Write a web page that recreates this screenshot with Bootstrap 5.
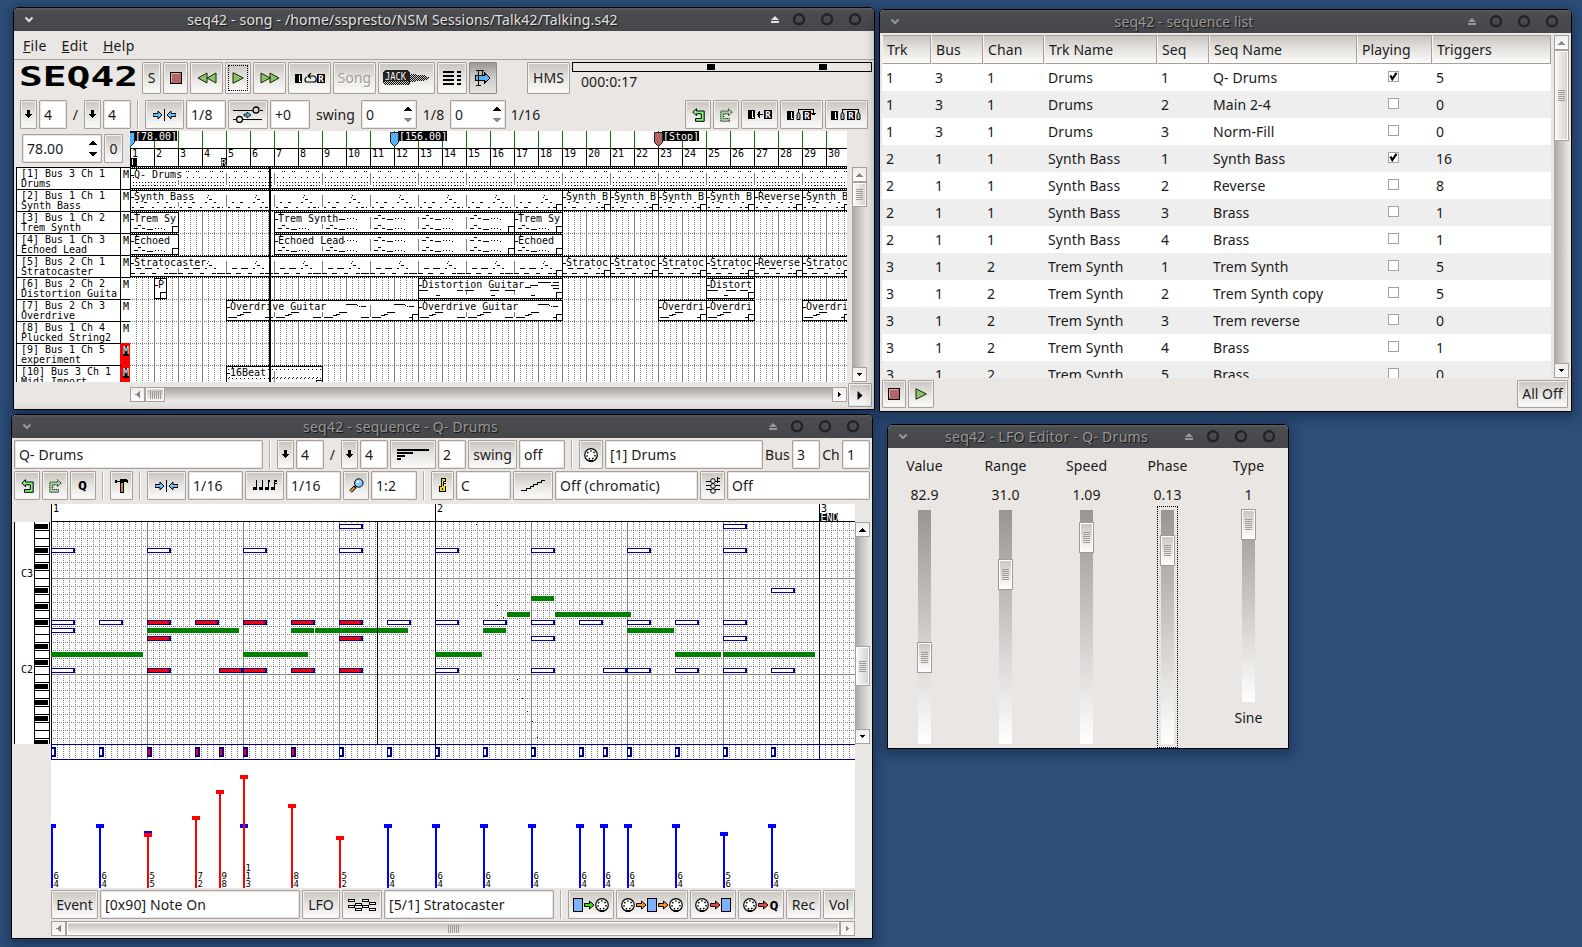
<!DOCTYPE html>
<html lang="en">
<head>
<meta charset="utf-8">
<title>seq42</title>
<link href="https://cdn.jsdelivr.net/npm/bootstrap@5.3.0/dist/css/bootstrap.min.css" rel="stylesheet">
<style>
html,body{height:100%}
body{background:#2d4e79;font:14px/18px "Noto Sans","Open Sans",sans-serif;letter-spacing:.1px;color:#1a1a1a;overflow:hidden;position:relative}
svg{display:block;shape-rendering:crispEdges;flex:none;letter-spacing:0}
svg .sm{shape-rendering:auto}
svg text{font-family:"DejaVu Sans Mono",monospace;font-size:10px}
.win{position:absolute;border:1px solid #000;border-radius:5px 5px 0 0;background:#eae6e3;box-shadow:0 3px 12px 3px rgba(8,20,45,.4);overflow:hidden;display:flex;flex-direction:column}
.w-song{left:13px;top:7px;width:862px;height:403px}
.w-list{left:879px;top:9px;width:693px;height:403px}
.w-seq{left:11px;top:414px;width:862px;height:525px}
.w-lfo{left:887px;top:424px;width:402px;height:325px}
.titlebar{height:23px;flex:none;background:linear-gradient(#5b5d60,#4b4d50 12%,#454649);color:#97989a;text-shadow:1px 1px 1px #111;display:flex;align-items:center}
.titlebar>span{flex:1;text-align:center;white-space:nowrap}
.titlebar.on{color:#e0e1e2}
.menu{height:29px;border-bottom:1px solid #a9a29c;padding:1px 0 0 9px;gap:15px;letter-spacing:.3px}
.bar{gap:2px;flex:none;display:flex;align-items:center}
.g29{height:29px}.g32{height:32px}
.btn.tb{--bs-btn-padding-x:0;--bs-btn-padding-y:0;--bs-btn-border-radius:1px;height:100%;flex:none;display:flex;align-items:center;justify-content:center;font-size:14px;line-height:1;color:#1c1c1c;border:1px solid #a8a19b;box-shadow:inset 0 0 0 1px #f3f1ef;background:linear-gradient(#c9c4bf,#e6e4e1 50%,#fcfcfb);white-space:nowrap}
.btn.tb.dim{color:#a09a95;text-shadow:1px 1px #fff}
.btn.tb.held{background:linear-gradient(#9b9794,#cfccca 50%,#e6e4e2);box-shadow:none;border-color:#8f8984}
.ent{height:100%;flex:none;background:#fff;border:1px solid #a8a19b;border-radius:1px;box-shadow:inset 0 0 0 1px #e8e5e2;display:flex;align-items:center;padding:0 4px;justify-content:space-between;white-space:nowrap}
.tx{flex:none;text-align:center;white-space:nowrap}
.sep{width:2px;height:100%;border-left:1px solid #b3aca6;border-right:1px solid #fff;margin:0 4px;flex:none}
.w17{width:17px}.w18{width:18px}.w19{width:19px}.w20{width:20px}.w23{width:23px}.w24{width:24px}.w25{width:25px}.w26{width:26px}.w28{width:28px}.w30{width:30px}.w32{width:32px}.w33{width:33px}.w35{width:35px}.w37{width:37px}.w38{width:38px}.w39{width:39px}.w40{width:40px}.w43{width:43px}.w46{width:46px}.w47{width:47px}.w49{width:49px}.w51{width:51px}.w55{width:55px}.w56{width:56px}.w57{width:57px}.w72{width:72px}.w80{width:80px}.w143{width:143px}.w158{width:158px}.w170{width:170px}.w200{width:200px}.w249{width:249px}
.focus{width:20px;height:26px;border:1px dotted #000;display:flex;align-items:center;justify-content:center}
.tracks{width:114px;height:215px;overflow:hidden;background:#fff;border-left:1px solid #000;font:10px/10px "DejaVu Sans Mono",monospace;letter-spacing:-.02px}
.trk{height:22px;border-top:1px solid #000;display:flex;color:#000}
.trk>div{width:104px;flex:none;border-right:1px solid #000;padding:1px 0 0 4px;white-space:pre}
.trk>b{flex:1;font-weight:400;padding:2px 0 0 2px}
.trk>b>i{font-style:normal;display:block;width:6px;height:10px;line-height:10px}
.trk.mu>div{border-right-color:#f00}
.trk.mu>b{background:#f00;color:#fff;margin-top:-1px;padding-top:3px}
.trk.mu>b>i{background:#000}
.sbtn{width:15px;height:15px;flex:none;border:1px solid #a8a19b;background:linear-gradient(#efedeb,#fdfdfd);display:flex;align-items:center;justify-content:center}
.sv{width:15px;display:flex;flex-direction:column;background:linear-gradient(90deg,#a9a6a4,#e9e7e5);flex:none}
.sh{height:15px;display:flex;background:linear-gradient(#a3a09d,#efedeb);flex:none}
.thumb{border:1px solid #a8a19b;display:flex;align-items:center;justify-content:center;flex:none;box-shadow:inset 0 0 0 1px #fff}
.sv .thumb{width:15px;background:linear-gradient(90deg,#fbfbfa,#d3cfcb)}
.sh .thumb{height:15px;background:linear-gradient(#fbfbfa 0,#c9c5c0 20%,#fbfbfa)}
.lst{display:grid;grid-template-columns:49px 52px 61px 113px 52px 148px 75px 119px;width:669px}
.lst.hd{height:29px;flex:none}
.hd>div{border:1px solid #a8a19b;border-left-color:#f6f4f2;border-right-width:1px;background:linear-gradient(#c9c4bf,#e6e4e1 50%,#fbfbfa);padding:5px 0 0 4px}
.lr{height:27px;background:#fff}.lr:nth-child(even){background:#eee}
.lr>div{padding:5px 0 0 4px;white-space:nowrap}
.cbx{width:11px;height:11px;border:1px solid #a8a19b;background:#fff;margin:2px 0 0 27px}
.sld{width:81px;display:flex;flex-direction:column;align-items:center;flex:none}
.trough{position:relative;width:13px;background:linear-gradient(#999593,#fff)}
.knob{position:absolute;left:-1px;width:15px;height:31px;border:1px solid #a39c96;box-shadow:inset 0 0 0 1px #fff;background:linear-gradient(#cac6c1,#fff);display:flex;align-items:center;justify-content:center}
.ring{position:absolute;inset:-4px -4px -4px -4px;border:1px dotted #000}
</style>
</head>
<body>
<svg width="0" height="0" style="position:absolute">
<defs>
<symbol id="ctl" viewBox="0 0 109 23"><g class="sm" fill="none" stroke="#222325" stroke-width="2.4"><circle cx="34" cy="11.3" r="5"/><circle cx="62" cy="11.3" r="5"/><circle cx="90" cy="11.3" r="5"/></g><g class="sm" fill="currentColor"><path d="M6 12l4-4 4 4z"/><rect x="6" y="13" width="8" height="2"/></g></symbol>
<symbol id="chev" viewBox="0 0 26 23"><path class="sm" d="M11.500 9.500l3.500 3.500 3.500-3.500" fill="none" stroke="currentColor" stroke-width="2"/></symbol>
<symbol id="dn" viewBox="1 0 8 9"><path d="M3 0h3v4h2v1l-3.500 3-3.500-3v-1h2z"/></symbol>
<symbol id="spin" viewBox="0 0 8 17"><path d="M0 5l4-4.500 4 4.500z"/><path d="M0 12l4 4.500 4-4.500z" fill="var(--lo,#000)"/></symbol>
<symbol id="stop" viewBox="0 0 12 12"><rect width="12" height="12"/><rect x="1" y="1" width="10" height="10" fill="#b46464"/><path d="M1 1h9v1H2v8H1z" fill="#e4a8a8"/></symbol>
<symbol id="play" viewBox="0 0 12 12"><path class="sm" d="M1 .7v10.600L11.300 6z" fill="#8fc16a" stroke="#122b08"/></symbol>
<symbol id="ff" viewBox="0 0 20 12"><path class="sm" d="M1 1v10l9-5zM10 1v10l9-5z" fill="#8fc16a" stroke="#122b08"/></symbol>
<symbol id="L" viewBox="0 0 8 9"><rect width="7" height="9"/><path d="M4.500 1v6.500H6" fill="none" stroke="#fff"/></symbol>
<symbol id="R" viewBox="0 0 8 9"><rect width="8" height="9"/><text x="1.200" y="8" fill="#fff" style="font-size:9px;font-weight:bold">R</text></symbol>
<symbol id="loop" viewBox="0 0 30 11"><use href="#L" y="1" width="8" height="9"/><path class="sm" d="M12 4c-3 1-2.500 5 0 5h7c3 0 3-5 0-6h-6M16 0l-3 3 3 2.500" fill="none" stroke="#000" stroke-width="1.200"/><use href="#R" x="22" y="1" width="8" height="9"/></symbol>
<pattern id="chk" width="2" height="2" patternUnits="userSpaceOnUse"><rect width="2" height="2" fill="#c9c6c2"/><rect width="1" height="1" fill="#111"/><rect x="1" y="1" width="1" height="1" fill="#111"/></pattern>
<symbol id="jack" viewBox="0 0 48 16"><path d="M2 0h23l2 3v10l-2 2H2l-2-2V2z" fill="#222"/><path d="M1 11h25v2l-2 2H2l-1-2z" fill="url(#chk)"/><path d="M27 4h6v1h8l6 3-6 3H33v1h-6z" fill="url(#chk)"/><text x="2" y="10" fill="#f4f4f4" textLength="21" lengthAdjust="spacingAndGlyphs">JACK</text></symbol>
<symbol id="lines" viewBox="0 0 18 14"><path d="M0 1h11M0 5h11M0 9h11M0 13h11M14 1h4M14 5h4M14 9h4M14 13h4" stroke="#000" stroke-width="2"/></symbol>
<symbol id="follow" viewBox="0 0 18 16"><path d="M1 5.500h9V2.500L16 8l-6 5.500v-3H1z" fill="#55b5f5" stroke="#000"/><path d="M4.500 0v15M8.500 0v5M2 .5h8M2 15h5" stroke="#000"/></symbol>
<symbol id="snap" viewBox="0 0 23 12"><g class="sm" fill="#6cc4fa" stroke="#000"><path d="M0 4.500h5V2l4 4-4 4V7.500H0z"/><path d="M23 4.500h-5V2l-4 4 4 4V7.500h5z"/></g><path d="M11.500 0v12" stroke="#000"/></symbol>
<symbol id="trans" viewBox="0 0 30 17"><path d="M0 4.500h20M27 4.500h3M0 13.500h3M10 13.500h19" stroke="#000"/><g class="sm" fill="none" stroke="#000" stroke-width="1.300"><circle cx="23" cy="4" r="3"/><circle cx="6.500" cy="13.500" r="3"/></g><path class="sm" d="M11 8h3V6l4 3-4 3v-2h-3z" fill="#55b5f5" stroke="#000" stroke-width=".8"/></symbol>
<symbol id="undo" viewBox="0 0 13 14"><path class="sm" d="M.8 4L4.500.700v2.300h7.700v10.300H3.500v-2.800h5.800V5.800H4.500v2z" fill="#7df07d" stroke="#000"/></symbol>
<symbol id="redo" viewBox="0 0 13 14"><path class="sm" d="M12.200 4L8.500.700v2.300H.8v10.300h8.700v-2.800H3.700V5.800h4.800v2z" fill="#9ed39e" stroke="#222" stroke-dasharray="1.300 .7"/></symbol>
<symbol id="bott" viewBox="0 0 5 9"><path class="sm" d="M1 8.500v-5L2.500 1 4 3.500v5z" fill="#b5b8a8" stroke="#000"/></symbol>
<symbol id="lr1" viewBox="0 0 24 11"><use href="#L" y="1" width="8" height="9"/><path d="M9 5.500h6M11.500 2v7M10.500 3v5" stroke="#000"/><use href="#R" x="16" y="1" width="8" height="9"/></symbol>
<symbol id="lr2" viewBox="0 0 30 12"><use href="#L" y="2" width="8" height="9"/><use href="#bott" x="9" y="2" width="5" height="9"/><use href="#R" x="16" y="2" width="8" height="9"/><path d="M11.500 3V.5h15V5M24 4.500h5M25 5.500h3" fill="none" stroke="#000"/></symbol>
<symbol id="lr3" viewBox="0 0 31 12"><use href="#L" y="2" width="8" height="9"/><use href="#bott" x="9" y="2" width="5" height="9"/><use href="#R" x="16" y="2" width="8" height="9"/><use href="#bott" x="25" y="2" width="5" height="9"/><path d="M11.500 3V.5h16V3" fill="none" stroke="#000"/></symbol>
<symbol id="bars" viewBox="0 0 32 11"><path d="M0 1h32M0 4h16M0 7h8M0 10h4" stroke="#000" stroke-width="2"/></symbol>
<symbol id="ham" viewBox="0 0 13 14"><path d="M0 1h2v1h3V0h6l2 2v2h-1V3H9v1H5V3H2v1H0z"/><rect x="5" y="4" width="4" height="10"/><rect x="6" y="4" width="2" height="9" fill="#c48a3e"/></symbol>
<symbol id="notes" viewBox="0 0 24 11"><g fill="#000"><rect y="7" width="4" height="3"/><rect x="3" width="1" height="9"/><rect x="6" y="7" width="4" height="3"/><rect x="9" width="1" height="9"/><rect x="12" y="7" width="4" height="3"/><rect x="15" width="1" height="9"/><rect x="15" width="2" height="2"/><rect x="18" y="7" width="4" height="3"/><rect x="21" width="1" height="9"/><rect x="21" width="3" height="2"/><rect x="21" y="3" width="3" height="1"/></g></symbol>
<symbol id="mag" viewBox="0 0 15 15"><path class="sm" d="M1.500 13.500l5-5" stroke="#000" stroke-width="3.500"/><path class="sm" d="M1.500 13.500l4-4" stroke="#e0952e" stroke-width="2"/><circle class="sm" cx="9.800" cy="5" r="4.200" fill="#7fd0fa" stroke="#000"/><circle class="sm" cx="8.800" cy="3.800" r="1.300" fill="#fff"/></symbol>
<symbol id="key" viewBox="0 0 8 15"><path d="M2 0h5v4H5v1h2v1H5v2h2v6H0V8h2z"/><path d="M3 1h3v2H4v5h2v5H1V9h2z" fill="#f5d800"/><rect x="3" y="10" width="1" height="2"/></symbol>
<symbol id="scale" viewBox="0 0 24 13"><path d="M0 11.500h5v-2h4v-2h3v-2h4v-2h4v-2h4" fill="none" stroke="#000"/></symbol>
<symbol id="chord" viewBox="0 0 14 17"><path d="M0 4.500h14M0 8.500h14M0 12.500h14" stroke="#000"/><g class="sm" fill="#eee" stroke="#000"><circle cx="7" cy="4" r="2.300"/><circle cx="7" cy="9" r="2.300"/><circle cx="7" cy="14" r="2.300"/></g><path d="M11.500 0v6M11 1h3" stroke="#000"/></symbol>
<symbol id="din" viewBox="0 0 14 14"><circle class="sm" cx="7" cy="7" r="6.300" fill="#fff" stroke="#000" stroke-width="1.200"/><circle class="sm" cx="7" cy="7" r="4" fill="none" stroke="#000" stroke-width="1.500" stroke-dasharray="1.500 2"/><path d="M5 13h4" stroke="#000" stroke-width="2"/></symbol>
<symbol id="pg" viewBox="0 0 10 14"><rect x=".5" y=".5" width="9" height="13" fill="#7fb2fb" stroke="#000"/></symbol>
<symbol id="arr" viewBox="0 0 11 10"><path class="sm" d="M.5 3.500h5V1l4.500 4L5.500 9V6.500h-5z" stroke="#000"/></symbol>
<symbol id="io1" viewBox="0 0 36 14"><use href="#pg" width="10" height="14"/><use href="#arr" x="11" y="2" width="11" height="10" fill="#3dde10"/><use href="#din" x="22" width="14" height="14"/></symbol>
<symbol id="io2" viewBox="0 0 62 14"><use href="#din" width="14" height="14"/><use href="#arr" x="15" y="2" width="11" height="10" fill="#f5942a"/><use href="#pg" x="26" width="10" height="14"/><use href="#arr" x="37" y="2" width="11" height="10" fill="#f5942a"/><use href="#din" x="48" width="14" height="14"/></symbol>
<symbol id="io3" viewBox="0 0 36 14"><use href="#din" width="14" height="14"/><use href="#arr" x="15" y="2" width="11" height="10" fill="#f04848"/><use href="#pg" x="26" width="10" height="14"/></symbol>
<symbol id="io4" viewBox="0 0 36 14"><use href="#din" width="14" height="14"/><use href="#arr" x="15" y="2" width="11" height="10" fill="#f04848"/><text x="26.500" y="12" textLength="9" lengthAdjust="spacingAndGlyphs" style="font-size:13px;font-weight:bold">Q</text></symbol>
<symbol id="waves" viewBox="0 0 28 12"><g fill="#fff" stroke="#000"><rect x=".5" y=".5" width="6" height="2"/><rect x="7.500" y="4.500" width="6" height="2"/><rect x="14.500" y=".5" width="6" height="2"/><rect x="21.500" y="3.500" width="6" height="2"/><rect x=".5" y="6.500" width="6" height="2"/><rect x="7.500" y="9.500" width="6" height="2"/><rect x="14.500" y="6.500" width="6" height="2"/><rect x="21.500" y="9.500" width="6" height="2"/></g></symbol>
<symbol id="gv" viewBox="0 0 7 11"><path d="M0 .5h7M0 2.500h7M0 4.500h7M0 6.500h7M0 8.500h7M0 10.500h7" stroke="#a09a95"/></symbol>
<symbol id="gh" viewBox="0 0 11 8"><path d="M.5 0v8M2.500 0v8M4.500 0v8M6.500 0v8M8.500 0v8M10.500 0v8" stroke="#a09a95"/></symbol>
<symbol id="up" viewBox="0 0 7 5"><path d="M0 4.500L3.500.5 7 4.500z"/></symbol>
<symbol id="down" viewBox="0 0 7 5"><path d="M0 .5h7L3.500 4.500z"/></symbol>
<symbol id="left" viewBox="0 0 5 7"><path d="M4.500 0v7L.5 3.500z"/></symbol>
<symbol id="right" viewBox="0 0 5 7"><path d="M.5 0v7l4-3.500z"/></symbol>
</defs>
</svg>

<!-- Song window -->
<section class="win w-song">
  <div class="titlebar on"><svg width="26" height="23"><use href="#chev"/></svg><span style="letter-spacing:.16px">seq42 - song - /home/sspresto/NSM Sessions/Talk42/Talking.s42</span><svg width="109" height="23"><use href="#ctl"/></svg></div>
  <nav class="menu d-flex align-items-center"><span><u>F</u>ile</span><span><u>E</u>dit</span><span><u>H</u>elp</span></nav>
  <div class="bar g32" style="margin:2px 0 0 6px">
    <svg width="120" height="32"><text x="-1" y="23.500" textLength="119" lengthAdjust="spacingAndGlyphs" style="font:bold 27px 'DejaVu Sans Mono',monospace">SEQ42</text></svg>
    <button class="btn tb w19">S</button>
    <button class="btn tb w25"><svg width="12" height="12"><use href="#stop"/></svg></button>
    <button class="btn tb w33"><svg width="20" height="12"><use href="#ff" transform="matrix(-1 0 0 1 20 0)"/></svg></button>
    <button class="btn tb w26"><span class="focus"><svg width="12" height="12"><use href="#play"/></svg></span></button>
    <button class="btn tb w33"><svg width="20" height="12"><use href="#ff"/></svg></button>
    <button class="btn tb w43"><svg width="30" height="11"><use href="#loop"/></svg></button>
    <button class="btn tb w43 dim">Song</button>
    <button class="btn tb w57"><svg width="48" height="16"><use href="#jack"/></svg></button>
    <button class="btn tb w30"><svg width="18" height="14"><use href="#lines"/></svg></button>
    <button class="btn tb w28 held"><svg width="18" height="16"><use href="#follow"/></svg></button>
    <button class="btn tb w43" style="margin-left:28px">HMS</button>
    <div class="align-self-start"><svg width="300" height="10"><rect x=".5" y=".5" width="299" height="9" fill="#eae6e3" stroke="#000"/><rect x="135" y="2" width="8" height="6"/><rect x="247" y="2" width="8" height="6"/></svg><div style="margin:1px 0 0 9px">000:0:17</div></div>
  </div>
  <div class="bar g29" style="margin:6px 0 0 6px">
    <button class="btn tb w17"><svg width="8" height="9"><use href="#dn"/></svg></button><div class="ent w28">4</div><span class="tx" style="width:13px">/</span>
    <button class="btn tb w17"><svg width="8" height="9"><use href="#dn"/></svg></button><div class="ent w28">4</div><i class="sep"></i>
    <button class="btn tb w39"><svg width="23" height="12"><use href="#snap"/></svg></button><div class="ent w40">1/8</div>
    <button class="btn tb w40"><svg width="30" height="17"><use href="#trans"/></svg></button><div class="ent w40">+0</div>
    <span class="tx" style="width:47px">swing</span>
    <div class="ent w56" style="--lo:#888">0<svg width="8" height="17"><use href="#spin"/></svg></div>
    <span class="tx" style="width:29px">1/8</span>
    <div class="ent w56" style="--lo:#888">0<svg width="8" height="17"><use href="#spin"/></svg></div>
    <span class="tx" style="width:35px">1/16</span>
    <button class="btn tb w26 ms-auto"><svg width="13" height="14"><use href="#undo"/></svg></button>
    <button class="btn tb w26"><svg width="13" height="14"><use href="#redo"/></svg></button>
    <button class="btn tb w37"><svg width="24" height="11"><use href="#lr1"/></svg></button>
    <button class="btn tb w43"><svg width="30" height="12"><use href="#lr2"/></svg></button>
    <button class="btn tb w43" style="margin-right:6px"><svg width="31" height="12"><use href="#lr3"/></svg></button>
  </div>
  <div class="d-flex" style="margin-top:2px">
    <div style="padding:0 0 0 2px;width:116px">
      <div class="bar g29" style="margin:3px 0 4px 6px"><div class="ent w80">78.00<svg width="8" height="17"><use href="#spin"/></svg></div><button class="btn tb w19">0</button></div>
      <div class="tracks" id="tracks"></div>
    </div>
    <div id="song"></div>
    <div class="sv" style="margin:36px 0 0 5px;height:215px"><div class="sbtn"><svg width="7" height="5" fill="#888"><use href="#up"/></svg></div><div class="thumb" style="height:25px"><svg width="7" height="11"><use href="#gv"/></svg></div><div class="sbtn mt-auto"><svg width="7" height="5"><use href="#down"/></svg></div></div>
  </div>
  <div class="d-flex">
    <div class="sh" style="width:717px;margin:5px 0 0 116px"><div class="sbtn"><svg width="5" height="7" fill="#888"><use href="#left"/></svg></div><div class="thumb w20"><svg width="11" height="8"><use href="#gh"/></svg></div><div class="sbtn ms-auto"><svg width="5" height="7"><use href="#right"/></svg></div></div>
    <button class="btn tb w24" style="height:24px;margin:1px 0 0 1px"><svg width="6" height="9" viewBox="0 0 6 9"><path class="sm" d="M.5 0v9L5.500 4.500z"/></svg></button>
  </div>
</section>

<!-- Sequence list -->
<section class="win w-list">
  <div class="titlebar"><svg width="26" height="23"><use href="#chev"/></svg><span>seq42 - sequence list</span><svg width="109" height="23"><use href="#ctl"/></svg></div>
  <div class="d-flex" style="margin:2px 0 0 2px">
    <div style="height:343px;overflow:hidden;background:#fff">
      <div class="lst hd"><div>Trk</div><div>Bus</div><div>Chan</div><div>Trk Name</div><div>Seq</div><div>Seq Name</div><div>Playing</div><div>Triggers</div></div>
      <div id="rows"></div>
    </div>
    <div class="sv" style="margin-left:3px;height:343px"><div class="sbtn"><svg width="7" height="5" fill="#888"><use href="#up"/></svg></div><div class="thumb" style="height:91px"><svg width="7" height="11"><use href="#gv"/></svg></div><div class="sbtn mt-auto"><svg width="7" height="5"><use href="#down"/></svg></div></div>
  </div>
  <div class="bar" style="height:28px;margin:2px 3px 0 2px"><button class="btn tb w24"><svg width="12" height="12"><use href="#stop"/></svg></button><button class="btn tb w26"><svg width="12" height="12"><use href="#play"/></svg></button><button class="btn tb w51 ms-auto">All Off</button></div>
</section>

<!-- Sequence editor -->
<section class="win w-seq">
  <div class="titlebar"><svg width="26" height="23"><use href="#chev"/></svg><span style="letter-spacing:.2px">seq42 - sequence - Q- Drums</span><svg width="109" height="23"><use href="#ctl"/></svg></div>
  <div class="bar g29" style="margin:2px 0 0 2px">
    <div class="ent w249">Q- Drums</div><i class="sep"></i>
    <button class="btn tb w17"><svg width="8" height="9"><use href="#dn"/></svg></button><div class="ent w28">4</div><span class="tx" style="width:13px">/</span>
    <button class="btn tb w17"><svg width="8" height="9"><use href="#dn"/></svg></button><div class="ent w28">4</div>
    <button class="btn tb w46"><svg width="32" height="11"><use href="#bars"/></svg></button><div class="ent w28">2</div>
    <button class="btn tb w49">swing</button><div class="ent w46">off</div><i class="sep"></i>
    <button class="btn tb w24"><svg width="14" height="14"><use href="#din"/></svg></button><div class="ent w158">[1] Drums</div>
    <span class="tx w25">Bus</span><div class="ent w28">3</div><span class="tx w18">Ch</span><div class="ent w28">1</div>
  </div>
  <div class="bar g29" style="margin:2px 0 0 2px">
    <button class="btn tb w26"><svg width="13" height="14"><use href="#undo"/></svg></button><button class="btn tb w26"><svg width="13" height="14"><use href="#redo"/></svg></button>
    <button class="btn tb w26"><svg width="10" height="14"><text x="0" y="11" textLength="9" lengthAdjust="spacingAndGlyphs" style="font-size:13px;font-weight:bold">Q</text></svg></button><i class="sep"></i>
    <button class="btn tb w23"><svg width="13" height="14"><use href="#ham"/></svg></button><i class="sep"></i>
    <button class="btn tb w39"><svg width="23" height="12"><use href="#snap"/></svg></button><div class="ent w55">1/16</div>
    <button class="btn tb w39"><svg width="24" height="11"><use href="#notes"/></svg></button><div class="ent w55">1/16</div>
    <button class="btn tb w26"><svg width="15" height="15"><use href="#mag"/></svg></button><div class="ent w46">1:2</div><i class="sep"></i>
    <button class="btn tb w23"><svg width="8" height="15"><use href="#key"/></svg></button><div class="ent w55">C</div>
    <button class="btn tb w40"><svg width="24" height="13"><use href="#scale"/></svg></button><div class="ent w143">Off (chromatic)</div>
    <button class="btn tb w25"><svg width="14" height="17"><use href="#chord"/></svg></button><div class="ent w143">Off</div>
  </div>
  <div class="d-flex" style="margin:4px 0 0 2px">
    <div id="keys" style="margin-top:18px"></div>
    <div id="roll"></div>
    <div class="sv" style="margin-top:18px;height:222px"><div class="sbtn"><svg width="7" height="5"><use href="#up"/></svg></div><div class="thumb" style="height:40px;margin-top:109px"><svg width="7" height="11"><use href="#gv"/></svg></div><div class="sbtn mt-auto"><svg width="7" height="5"><use href="#down"/></svg></div></div>
  </div>
  <div class="bar g29" style="margin:2px 0 0 39px">
    <button class="btn tb w47">Event</button><div class="ent w200">[0x90] Note On</div><button class="btn tb w38">LFO</button>
    <button class="btn tb w40"><svg width="28" height="12"><use href="#waves"/></svg></button><div class="ent w170">[5/1] Stratocaster</div><i class="sep"></i>
    <button class="btn tb w46"><svg width="36" height="14"><use href="#io1"/></svg></button>
    <button class="btn tb w72"><svg width="62" height="14"><use href="#io2"/></svg></button>
    <button class="btn tb w46"><svg width="36" height="14"><use href="#io3"/></svg></button>
    <button class="btn tb w46"><svg width="36" height="14"><use href="#io4"/></svg></button>
    <button class="btn tb w35">Rec</button><button class="btn tb w32">Vol</button>
  </div>
  <div class="sh" style="margin:2px 0 0 39px;width:804px"><div class="sbtn"><svg width="5" height="7" fill="#888"><use href="#left"/></svg></div><div class="thumb" style="width:774px"><svg width="11" height="8"><use href="#gh"/></svg></div><div class="sbtn"><svg width="5" height="7" fill="#888"><use href="#right"/></svg></div></div>
</section>

<!-- LFO editor -->
<section class="win w-lfo">
  <div class="titlebar"><svg width="26" height="23"><use href="#chev"/></svg><span style="letter-spacing:.28px">seq42 - LFO Editor - Q- Drums</span><svg width="109" height="23"><use href="#ctl"/></svg></div>
  <div class="d-flex" id="lfo" style="padding:9px 0 0 0;margin-left:-4px"></div>
</section>

<script src="https://cdn.jsdelivr.net/npm/bootstrap@5.3.0/dist/js/bootstrap.bundle.min.js"></script>
<script>
const $=id=>document.getElementById(id);
const R=(x,y,w,h,f='#000')=>`<rect x="${x}" y="${y}" width="${w}" height="${h}" fill="${f}"/>`;
const B=(x,y,w,h,f='#fff',s='#000')=>`<rect x="${x+.5}" y="${y+.5}" width="${w}" height="${h}" fill="${f}" stroke="${s}"/>`;
const T=(x,y,s,f='#000',z)=>`<text x="${x}" y="${y}" fill="${f}"${z?` style="font-size:${z}px"`:''}>${s}</text>`;
const V=(x,a,b)=>`<path d="M${x+.5} ${a}V${b}" stroke="#808080" stroke-dasharray="1 1"/>`;
const H=(y,a,b,c='#808080')=>`<path d="M${a} ${y+.5}H${b}" stroke="${c}" stroke-dasharray="1 1"/>`;

/* track names */
$('tracks').innerHTML=[['3 Ch 1','Drums'],['1 Ch 1','Synth Bass'],['1 Ch 2','Trem Synth'],['1 Ch 3','Echoed Lead'],['2 Ch 1','Stratocaster'],['2 Ch 2','Distortion Guita'],['2 Ch 3','Overdrive'],['1 Ch 4','Plucked String2'],['1 Ch 5','experiment'],['3 Ch 1','Midi Import']]
 .map((t,i)=>`<div class="trk${i>7?' mu':''}"><div>[${i+1}] Bus ${t[0]}\n${t[1]}</div><b><i>M</i></b></div>`).join('');

/* song ruler and roll, origin is measure 1 */
(()=>{
 let s=R(0,0,717,251,'#fff');
 for(let i=0;i<30;i++){const x=i*24;s+=R(x,0,1,17,'#008000')+R(x,17,1,18)+T(x+2,26,i+1)}
 s+=R(0,17,717,1)+R(0,35,717,1);
 s+=R(0,0,47,10)+T(5,8.5,'[78.00]','#fff')+R(268,0,49,10)+T(269,8.5,'[156.00]','#fff')+R(532,0,37,10)+T(533,8.5,'[Stop]','#fff');
 const mk=(x,f)=>`<path class="sm" d="M${x-3.500} 1.500h8v10l-4 4-4-4z" fill="${f}" stroke="#222"/>`;
 s+=mk(0,'#55b0f8')+mk(264,'#55b0f8')+mk(528,'#b46464');
 s+=R(1,27,6,8)+R(2,28,1,6,'#fff')+R(91,27,6,8)+T(91,34.5,'R','#fff',9);
 for(let x=6;x<717;x+=6)s+=x%24?V(x,37,251):R(x,36,1,215,'#808080');
 for(let i=0;i<10;i++)s+=H(36+22*i,0,717);
 const top=[[30,6,1],[29,8,1],[31,10,3],[27,13,2],[36,13,2]];
 const P={
  none:[],drum:[],
  bass:[...top,[6,13,2],[14,13,3],[2,18,2],[10,18,4],[22,18,2],[34,18,2],[39,18,3],[44,18,1]],
  strat:[...top,[6,13,5],[15,13,7],[0,18,5],[10,18,5],[22,18,4],[34,18,4],[39,18,8]],
  trem:[4,14].flatMap(o=>[[8,o,3],[4,o+3,4],[12,o+3,3],[17,o+4,6],[25,o+3,1],[28,o+3,1],[31,o+3,1],[34,o+4,1]]),
  over:[[2,18,9],[11,16,4],[14,15,4],[17,13,8],[39,18,8],[24,5,11],[35,6,1],[37,7,1],[39,7,5]],
  dist:[[0,13,12],[18,18,4],[20,13,10],[34,13,8]],beat:[]};
 for(let x=3;x<48;x+=3){P.drum.push([x,15,1]);if(x%6)P.drum.push([x,10,1]);P.drum.push([x,18,x%4?1:2])}
 [8,10,18,20,32,34,42,44].forEach(x=>P.drum.push([x,4,1]));
 for(let x=2;x<48;x+=4)P.beat.push([x,4,1],[x+1,12,1],[x,13,1]);
 const seq=(r,a,b,n,p)=>{const y=36+22*r;let q=B(a,y+1,b-a,20)+H(y,a,b,'#000')+H(y+22,a,b,'#000');
  for(let x=a;x<b;x+=48){if(x>a)q+=R(x,y+6,1,12,'#808080');P[p].forEach(e=>{if(x+e[0]+e[2]<b)q+=R(x+e[0],y+e[1],e[2],1)})}
  q+=R(a+4,y+3,n.length*6,10,'#fff')+R(a,y+8,4,1)+T(a+4,y+11,n)+R(a+6,y+2,1,1)+B(b-6,y+15,6,6);s+=q};
 seq(0,0,760,'Q- Drums','drum');
 for(const [r,n,p] of [[1,'Synth Bass','bass'],[4,'Stratocaster','strat']]){seq(r,0,432,n,p);
  [0,1,2,3,4,5].forEach(i=>seq(r,432+48*i,480+48*i,i==4?'Reverse':n.slice(0,7),p))}
 for(const [r,n] of [[2,'Trem Synth'],[3,'Echoed Lead']]){seq(r,0,48,n.slice(0,7).trim(),'trem');seq(r,144,384,n,'trem');seq(r,384,432,n.slice(0,7).trim(),'trem')}
 seq(5,24,36,'P','none');seq(5,288,432,'Distortion Guitar','none');seq(5,576,624,'Distort','dist');
 /* distortion guitar phrase, then its tail above the name */
 [[288,159,10],[327,159,6],[335,159,9],[360,159,9],[375,159,10],[395,156,6],[400,154,8],[408,151,13],[421,154,8],[423,151,6],[423,157,6],[361,164,4],[401,164,4],[306,164,4]].forEach(e=>s+=R(e[0],e[1],e[2],1));
 seq(6,96,288,'Overdrive Guitar','over');seq(6,288,432,'Overdrive Guitar','over');
 [528,576,672].forEach(x=>seq(6,x,x+48,'Overdri','over'));
 seq(9,96,192,'16Beat','beat');
 s+=R(139,36,2,215);
 $('song').innerHTML=`<svg width="717" height="251">${s}</svg>`;
})();

/* sequence list rows */
$('rows').innerHTML=[[1,3,1,'Drums',1,'Q- Drums',1,5],[1,3,1,'Drums',2,'Main 2-4',0,0],[1,3,1,'Drums',3,'Norm-Fill',0,0],[2,1,1,'Synth Bass',1,'Synth Bass',1,16],[2,1,1,'Synth Bass',2,'Reverse',0,8],[2,1,1,'Synth Bass',3,'Brass',0,1],[2,1,1,'Synth Bass',4,'Brass',0,1],[3,1,2,'Trem Synth',1,'Trem Synth',0,5],[3,1,2,'Trem Synth',2,'Trem Synth copy',0,5],[3,1,2,'Trem Synth',3,'Trem reverse',0,0],[3,1,2,'Trem Synth',4,'Brass',0,1],[3,1,2,'Trem Synth',5,'Brass',0,0]]
 .map(r=>`<div class="lst lr">${r.map((c,i)=>i==6?`<div><div class="cbx">${c?'<svg width="9" height="9"><path class="sm" d="M1.500 3.500l1.800 3.500L7.500.8" fill="none" stroke="#000" stroke-width="2.200"/></svg>':''}</div></div>`:`<div>${c}</div>`).join('')}</div>`).join('');

/* keyboard: pitch rows are 8px */
(()=>{
 let s=R(0,0,37,222,'#fff')+R(0,0,1,222)+R(20,0,1,222)+R(35,0,1,222);
 for(let y=8;y<222;y+=8)s+=R(21,y,14,1);
 [2,26,42,66,82,98,122,138,162,178,194,218].forEach(y=>s+=R(21,y,13,5));
 s+=T(7,55,'C3')+T(7,151,'C2');
 $('keys').innerHTML=`<svg width="37" height="222">${s}</svg>`;
})();

/* piano roll, event strip and velocity graph */
(()=>{
 let s=R(0,0,804,384,'#fff');
 for(let x=6;x<804;x+=6)if(x%96)s+=V(x,18,240)+V(x,241,255);
 for(let y=26;y<240;y+=8)s+=(y-74)%96?H(y,0,804):R(0,y,804,1,'#808080');
 for(let x=96;x<804;x+=96)s+=R(x,18,1,238,'#808080');
 s+=R(0,17,804,1);
 [0,384,768].forEach((x,i)=>{s+=R(x,0,1,240)+T(x+2,8,i+1)+R(x,241,1,15,'#000090')});
 s+=R(769,9,18,8)+T(769.5,16.500,'END','#fff');
 s+=R(0,240,804,1,'#000090')+R(0,255,804,1,'#000090');
 const g='#008000',note=(x,y,r)=>s+=R(x,y,24,5,'#000090')+R(x+1,y+1,21,3,r?'#f00':'#fff');
 [[124,96,92],[124,240,23],[124,264,93],[124,432,23],[124,576,47],[148,0,92],[148,192,65],[148,384,47],[148,624,46],[148,672,92],[108,456,23],[108,504,76],[92,480,23]].forEach(n=>s+=R(n[1],n[0],n[2],5,g));
 const N={20:[288,672],44:[0,96,192,288,384,480,576,672],84:[720],116:[0,48,-96,-144,-192,-240,-288,336,384,432,480,528,576,624,672],124:[0],132:[-96,-288,480,672],164:[0,-96,-168,-192,-240,-288,384,480,552,576,624,672,720]};
 for(const y in N)N[y].forEach(x=>note(Math.abs(x),+y,x<0));
 s+=R(326,18,1,222);
 [[425,20],[446,101],[452,113],[466,175],[471,194],[476,207],[481,217],[486,233]].forEach(p=>s+=R(p[0],p[1],1,1));
 [[0,64],[48,64],[96,55,1],[144,72,1],[168,98,1],[192,113,1],[240,84,1],[288,52,1],[336,64],[384,64],[432,64],[480,64],[528,64],[552,64],[576,64],[624,64],[672,56],[720,64]].forEach(([x,v,r])=>{
  s+=R(x,243,5,10,'#000090')+R(x+1,245,2,6,r&&x!=288?'#f00':'#fff');
  const c=r?'#f00':'#00f';
  if(x==96)s+=R(x-3,327,8,4,'#00f');
  if(x==192)s+=R(x-3,320,8,4,'#00f');
  s+=R(x,384-v,2,v,c)+R(x-3,384-v,8,4,c);
  [...String(v)].reverse().forEach((d,i)=>s+=T(x+2.500,383-8*i,d,'#000',9));
 });
 $('roll').innerHTML=`<svg width="804" height="384">${s}</svg>`;
})();

/* LFO sliders: label, value, trough height, knob offset, focus, caption */
$('lfo').innerHTML=[['Value','82.9',234,132],['Range','31.0',234,49],['Speed','1.09',234,12],['Phase','0.13',234,25,1],['Type','1',192,-1,0,'Sine']]
 .map(l=>`<div class="sld"><span>${l[0]}</span><span style="margin:11px 0 6px">${l[1]}</span><div class="trough" style="height:${l[2]}px">${l[4]?'<i class="ring"></i>':''}<div class="knob" style="top:${l[3]}px"><svg width="7" height="11"><use href="#gv"/></svg></div></div>${l[5]?`<span style="margin-top:7px">${l[5]}</span>`:''}</div>`).join('');
</script>
</body>
</html>
